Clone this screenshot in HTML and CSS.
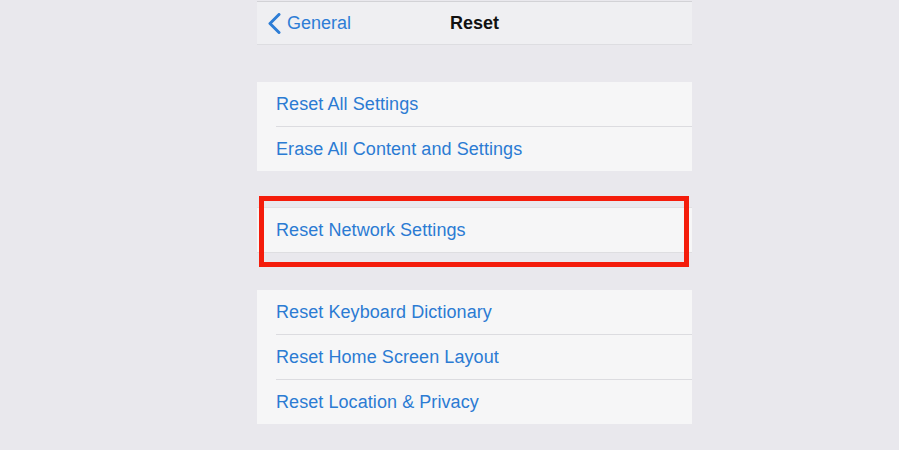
FILE: index.html
```html
<!DOCTYPE html>
<html>
<head>
<meta charset="utf-8">
<link rel="stylesheet" href="styles.css">
</head>
<body>
<div class="screen">
  <div class="nav">
    <div class="back">
      <svg class="chev" width="15" height="21" viewBox="0 0 15 21"><path d="M12 1.5 L3 10.5 L12 19.5" fill="none" stroke="#2d7dd6" stroke-width="3" stroke-linecap="round" stroke-linejoin="round"/></svg>
      <span>General</span>
    </div>
    <div class="title">Reset</div>
  </div>
  <div class="group first">
    <div class="row">Reset All Settings</div>
    <div class="row">Erase All Content and Settings</div>
  </div>
  <div class="group mid">
    <div class="row">Reset Network Settings</div>
    <div class="highlight"></div>
  </div>
  <div class="group last">
    <div class="row">Reset Keyboard Dictionary</div>
    <div class="row">Reset Home Screen Layout</div>
    <div class="row">Reset Location &amp; Privacy</div>
  </div>
</div>
</body>
</html>
```
FILE: styles.css
```css
html, body {
  margin: 0;
  padding: 0;
  background: #e9e8ed;
  font-family: "Liberation Sans", Arial, sans-serif;
}
.screen {
  width: 435px;
  margin-left: 257px;
  display: flex;
  flex-direction: column;
}
.nav {
  position: relative;
  margin-top: 1px;
  height: 42px;
  border-top: 1px solid #d2d2d6;
  background: #efeff2;
  border-bottom: 1px solid #dddde1;
  display: flex;
  align-items: center;
  justify-content: center;
}
.back {
  position: absolute;
  left: 10px;
  top: 0;
  bottom: 0;
  display: flex;
  align-items: center;
  gap: 5px;
  color: #2d7dd6;
  font-size: 18px;
}
.chev { display: block; margin-top: 1px; }
.title {
  font-size: 18px;
  font-weight: bold;
  color: #111;
}
.group {
  position: relative;
  background: #f6f6f7;
}
.group.first { margin-top: 37px; }
.group.mid {
  margin-top: 36px;
  border-top: 1px solid #e0e0e3;
  border-bottom: 1px solid #dedee1;
}
.group.last { margin-top: 37px; }
.row {
  height: 44px;
  margin-left: 19px;
  display: flex;
  align-items: center;
  color: #2b7bd3;
  font-size: 18px;
  letter-spacing: 0.07px;
}
.row + .row {
  border-top: 1px solid #dcdce0;
}
.highlight {
  position: absolute;
  left: 2px;
  right: 3px;
  top: -12px;
  bottom: -15px;
  border: 5px solid #f41c0b;
}
```
